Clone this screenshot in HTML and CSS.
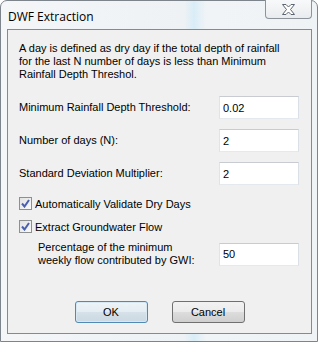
FILE: index.html
```html
<!DOCTYPE html>
<html>
<head>
    <title>DWF Extraction</title>
    <link rel="stylesheet" href="styles.css">
</head>
<body>
    <div class="window">
        <!-- Title bar -->
        <div class="titlebar">
            <span class="title">DWF Extraction</span>
            <div class="close-btn">
                <svg width="17" height="11" viewBox="0 0 17 11">
                    <path d="M2.5 0.5 H6 L8.5 3 L11 0.5 H14.5 L10.5 5.5 L14.5 10.5 H11 L8.5 8 L6 10.5 H2.5 L6.5 5.5 Z" fill="#ffffff" stroke="#5c6570" stroke-width="1"/>
                </svg>
            </div>
        </div>

        <!-- Dialog body -->
        <div class="client">
            <p class="intro">A day is defined as dry day if the total depth of rainfall for the last N number of days is less than Minimum Rainfall Depth Threshol.</p>

            <div class="field-row">
                <label for="minDepth">Minimum Rainfall Depth Threshold:</label>
                <input type="text" id="minDepth" value="0.02">
            </div>
            <div class="field-row">
                <label for="numDays">Number of days (N):</label>
                <input type="text" id="numDays" value="2">
            </div>
            <div class="field-row">
                <label for="stdMult">Standard Deviation Multiplier:</label>
                <input type="text" id="stdMult" value="2">
            </div>

            <div class="check-row first">
                <span class="checkbox">
                    <svg width="9" height="9" viewBox="0 0 9 9"><path d="M1 4.5 L3.5 7.5 L8 1" fill="none" stroke="#4a5fb0" stroke-width="2"/></svg>
                </span>
                <span>Automatically Validate Dry Days</span>
            </div>
            <div class="check-row">
                <span class="checkbox">
                    <svg width="9" height="9" viewBox="0 0 9 9"><path d="M1 4.5 L3.5 7.5 L8 1" fill="none" stroke="#4a5fb0" stroke-width="2"/></svg>
                </span>
                <span>Extract Groundwater Flow</span>
            </div>

            <div class="field-row sub">
                <label for="gwi">Percentage of the minimum<br>weekly flow contributed by GWI:</label>
                <input type="text" id="gwi" value="50">
            </div>

            <div class="buttons">
                <button class="default">OK</button>
                <button>Cancel</button>
            </div>
        </div>
    </div>
</body>
</html>
```

FILE: styles.css
```css
body {
    margin: 0;
    padding: 0;
    background-color: #ffffff;
    font-family: "Liberation Sans", Arial, sans-serif;
}

.window {
    width: 318px;
    height: 342px;
    box-sizing: border-box;
    border: 1px solid #7d848c;
    border-radius: 7px 7px 0 0;
    background: linear-gradient(90deg, #f4f6f8 0%, #eef2f5 58%, #d9edf7 61%, #f1f4f7 65%, #f0f3f6 100%);
    display: flex;
    flex-direction: column;
}

.titlebar {
    height: 28px;
    display: flex;
    align-items: flex-start;
}

.title {
    font-family: "Open Sans", "Liberation Sans", sans-serif;
    font-size: 12px;
    color: #000;
    padding: 7px 0 0 7px;
}

.close-btn {
    margin-left: auto;
    margin-right: 5px;
    margin-top: -1px;
    width: 47px;
    height: 19px;
    box-sizing: border-box;
    border: 1px solid #8c939b;
    border-top: none;
    border-radius: 0 0 4px 4px;
    background: linear-gradient(#f8f9fa, #e9ecef);
    display: flex;
    align-items: center;
    justify-content: center;
}

.client {
    margin: 0 5px 0 6px;
    height: 305px;
    box-sizing: border-box;
    border: 1px solid #848a91;
    background-color: #f0f0f0;
    padding: 12px 12px 0 11px;
    font-size: 11px;
    color: #000;
}

.intro {
    margin: 0 0 15px 0;
    line-height: 13px;
    width: 265px;
}

.field-row {
    display: flex;
    align-items: center;
    margin-bottom: 10px;
    line-height: 13px;
}

.field-row label {
    flex: 1;
}

.field-row input {
    width: 80px;
    height: 23px;
    box-sizing: border-box;
    border: 1px solid #abadb3;
    border-top-color: #c8ccd2;
    border-left-color: #e2e3ea;
    border-right-color: #dbdfe6;
    border-bottom-color: #e3e9ef;
    background: #fff;
    font-family: "Liberation Sans", Arial, sans-serif;
    font-size: 11px;
    padding: 0 0 0 3px;
    margin: 0;
    outline: none;
}

.check-row {
    display: flex;
    align-items: center;
    height: 17px;
    margin-bottom: 6px;
}

.check-row.first {
    margin-top: 1px;
}

.checkbox {
    width: 13px;
    height: 13px;
    box-sizing: border-box;
    border: 1px solid #8e8f8f;
    background: linear-gradient(135deg, #e2e2e2, #fafafa);
    display: flex;
    align-items: center;
    justify-content: center;
    margin-right: 3px;
}

.field-row.sub {
    padding-left: 19px;
    margin-top: 0;
}

.buttons {
    display: flex;
    justify-content: center;
    gap: 24px;
    margin-top: 34px;
    padding-left: 1px;
}

.buttons button {
    width: 73px;
    height: 22px;
    border: 1px solid #707070;
    border-radius: 3px;
    background: linear-gradient(#f2f2f2 0%, #ebebeb 50%, #dddddd 51%, #cfcfcf 100%);
    font-family: "Liberation Sans", Arial, sans-serif;
    font-size: 11px;
    color: #000;
    padding: 0;
}

.buttons button.default {
    border-color: #4f8ab5;
    background: linear-gradient(#eef4f8 0%, #e4edf3 50%, #d6e1e9 51%, #cbd8e2 100%);
    box-shadow: inset 0 0 0 1px #d8e8f2;
}
```
